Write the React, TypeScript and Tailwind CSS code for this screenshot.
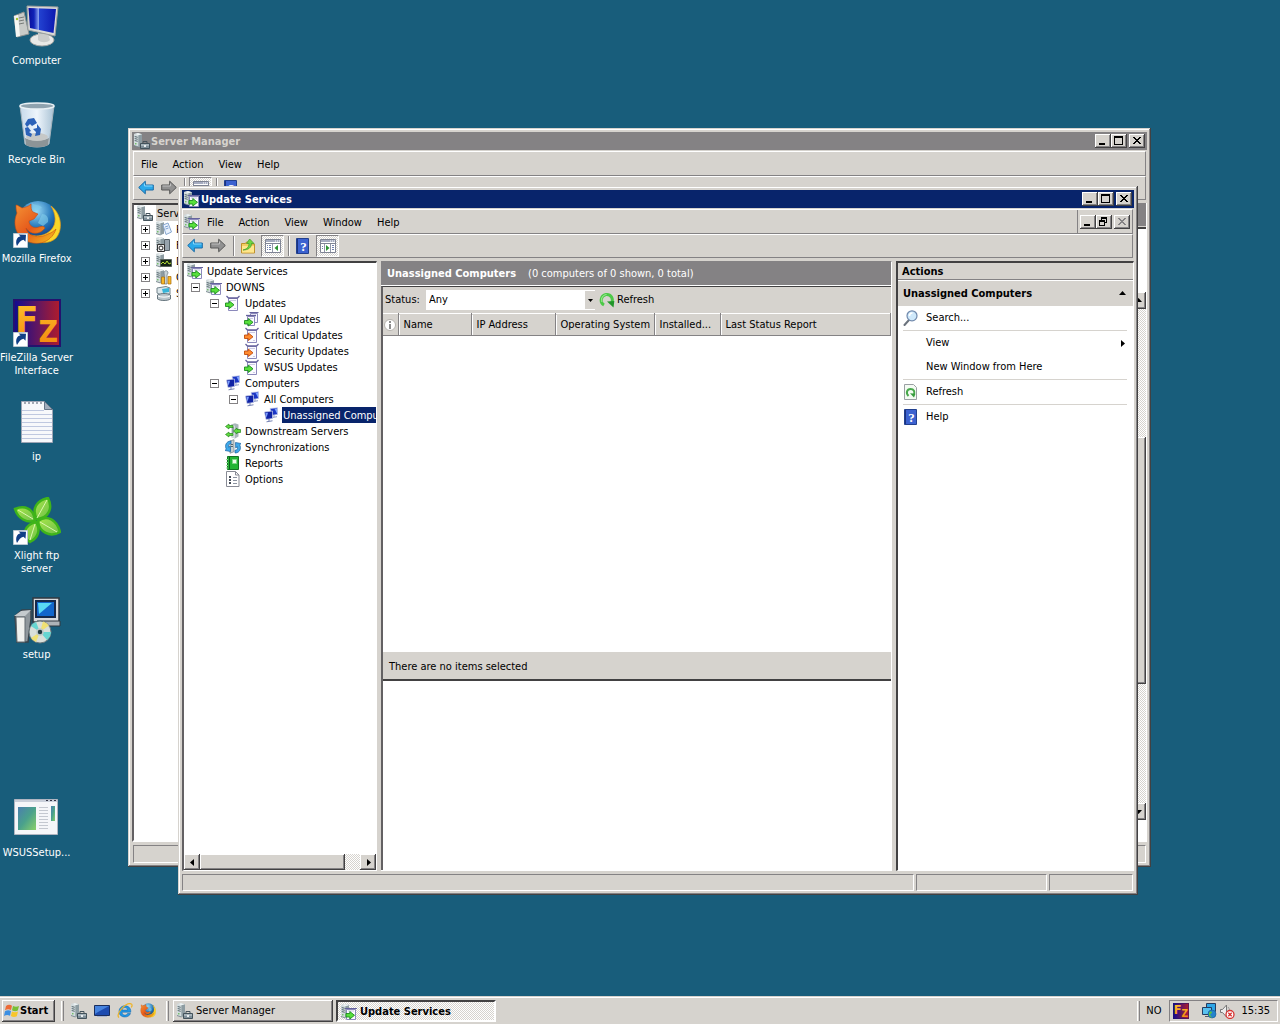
import React from "react";
import type { ReactNode } from "react";

const RAISED =
  "bg-[#d6d3ce] shadow-[inset_-1px_-1px_0_#424142,inset_1px_1px_0_#ffffff,inset_-2px_-2px_0_#848284]";
const CHECKER = "bg-[repeating-conic-gradient(#ffffff_0_25%,#d6d3ce_0_50%)] bg-[length:2px_2px]";
const BAND = "border border-t-white border-l-white border-r-[#848284] border-b-[#848284]";
const SUNKEN = "border border-t-[#848284] border-l-[#848284] border-r-white border-b-white";
const FRAME =
  "flex flex-col bg-[#d6d3ce] p-1 shadow-[inset_-1px_-1px_0_#424142,inset_1px_1px_0_#d6d3ce,inset_-2px_-2px_0_#848284,inset_2px_2px_0_#ffffff]";

/* ---------- small icons (16 x 16) ---------- */

function Svg16({ children }: { children: ReactNode }) {
  return (
    <svg viewBox="0 0 16 16" className="h-4 w-4 shrink-0" aria-hidden="true">
      {children}
    </svg>
  );
}

function Tower() {
  return (
    <>
      <path d="M0 1 4 0 8 1.300V12.500L4.500 14 0 12.500z" fill="#a3b1b5" />
      <path d="M0 1 4.500 2.300V14L0 12.500z" fill="#d3dcde" />
      <path d="M4.500 2.300 8 1.300V12.500L4.500 14z" fill="#8d9ca2" />
      <path d="M0 1 4 0l4 1.300-3.500 1z" fill="#eef3f4" />
      <path d="m.7 3.500 3 .8M.7 5.500l3 .8M.7 7.500l3 .8" stroke="#56676e" />
      <path d="M1 10.800h1.500" stroke="#4fb63a" />
      <path d="M0 12.500 4.500 14" stroke="#6f7f85" strokeWidth=".8" />
    </>
  );
}

function GreenArrow({ x = 0, y = 0, color = "#58e03c", edge = "#1c8c1e" }: { x?: number; y?: number; color?: string; edge?: string }) {
  return (
    <path
      transform={`translate(${x} ${y})`}
      d="M.5 2.500h3.800V.5L9 4.300 4.300 8V6H.5z"
      fill={color}
      stroke={edge}
      strokeWidth=".9"
    />
  );
}

function ServerUpdateIcon() {
  return (
    <Svg16>
      <Tower />
      <path d="M5.500 5.500h9v10h-9z" fill="#fbfbff" stroke="#8b89bb" />
      <path d="M4 4.500h12" stroke="#65629d" />
      <path d="M7 7h6" stroke="#c9c7e2" />
      <GreenArrow x={4.500} y={7} />
    </Svg16>
  );
}

function ServerToolsIcon() {
  return (
    <Svg16>
      <Tower />
      <path d="M6.500 10.500h9v5h-9z" fill="#7f8f99" stroke="#43525b" />
      <path d="M9 10V8.500h4V10" fill="none" stroke="#43525b" />
      <path d="M7 12h8" stroke="#ccd6da" />
      <path d="M10 12h2v2h-2z" fill="#e8edef" />
    </Svg16>
  );
}

function ServerBadgeIcon({ kind }: { kind: "roles" | "features" | "diag" | "config" }) {
  return (
    <Svg16>
      <Tower />
      {kind === "roles" && (
        <>
          <path d="m7 4 5-2 3.500 9-5.500 2.500z" fill="#e9f2fd" stroke="#86a6cf" />
          <path d="m9 6 3-1M9.500 8l3-1" stroke="#7da2d4" />
        </>
      )}
      {kind === "features" && (
        <>
          <path d="M8.500 2.500h5v11h-5z" fill="#98a4ad" stroke="#59656d" />
          <path d="M1.500 7.500h7v7h-7z" fill="#e7e7e7" stroke="#333" />
          <circle cx="5" cy="11" r="2" fill="#fff" stroke="#222" />
        </>
      )}
      {kind === "diag" && (
        <>
          <path d="M4.500 6.500h11v7h-11z" fill="#142314" stroke="#58625c" />
          <path d="m5 11 2-2 2 2 2-3 2 3 2-1" fill="none" stroke="#b3dd35" />
        </>
      )}
      {kind === "config" && (
        <>
          <path d="M8 4c0-3 4-3 4 0l-1 2v9H8.500V6z" fill="#c9d3d8" stroke="#6c7a82" strokeWidth=".7" />
          <path d="M5.500 8h3v7h-3zM12 7.500h3V15h-3z" fill="#f7b928" stroke="#a66c0b" strokeWidth=".7" />
        </>
      )}
    </Svg16>
  );
}

function StorageIcon() {
  return (
    <Svg16>
      <path d="M1 3 10 1.500l4 1.500v6L5 10 1 8z" fill="#dce7eb" stroke="#72838b" />
      <path d="m6 4 7-1v4L7 8z" fill="#36b4d8" />
      <path d="M1.500 10c3-2 10-2 13 0v4c-3 2-10 2-13 0z" fill="#bac5cb" stroke="#68777f" />
      <path d="M2 11c3 1.500 9 1.500 12 0" fill="none" stroke="#fff" />
    </Svg16>
  );
}

function UpdatesIcon({ color, edge, stacked = false }: { color?: string; edge?: string; stacked?: boolean }) {
  return (
    <Svg16>
      {stacked && (
        <>
          <path d="M6.500 2.500h7v9h-7z" fill="#f8f8ff" stroke="#8b89bb" />
          <path d="M5.500 1.500h9" stroke="#65629d" />
        </>
      )}
      <path d={stacked ? "M3.500 5.500h7v9h-7z" : "M3.500 3.500h9v12h-9z"} fill="#fbfbff" stroke="#8b89bb" />
      <path d={stacked ? "M2 4.500h10" : "M1.500 1 3.500 3h9l2-2"} fill="none" stroke="#65629d" strokeWidth="1.300" />
      <path d={stacked ? "M5 7.500h4" : "M5 5.500h6M9 13.500h2"} stroke="#cccae4" />
      <GreenArrow x={0} y={stacked ? 7 : 5.500} color={color} edge={edge} />
    </Svg16>
  );
}

function ComputersIcon() {
  return (
    <Svg16>
      <path d="M7 1.500 14.500.8v6.700L9 8.300z" fill="#1c36c4" stroke="#c5cde8" strokeWidth=".7" />
      <path d="m11.500 1.800 2.500-.3v5z" fill="#7fa3ff" />
      <path d="M11 8.200v1.800M9.500 10.500l4.500-.8" stroke="#8e9cc5" />
      <path d="M1.500 5 9.500 4v7.500L3 12.500z" fill="#1023a4" stroke="#c5cde8" strokeWidth=".7" />
      <path d="m2.500 6 2.500-.3-1.500 5z" fill="#7d9fff" />
      <path d="M6 12v2M3.500 14.800l6-1" stroke="#7482b3" />
    </Svg16>
  );
}

function DownstreamIcon() {
  return (
    <Svg16>
      <path d="M6 1.500 10 .3l3.500 1.200v12l-3.500 2-4-1.500z" fill="#a9b6ba" />
      <path d="M6 1.500 10 2.700v12.800L6 14z" fill="#d3dcde" />
      <path d="M7 5h2M7 7h2M7 9h2" stroke="#4c5d64" />
      <path d="M8 4.500H4V6L.5 3.500 4 1v1.500h4zM8 12.500H4V14L.5 11.500 4 9v1.500h4zM15.500 9.500H12V11L8.500 8 12 5v1.500h3.500z" fill="#5fdb3f" stroke="#25871d" strokeWidth=".7" />
    </Svg16>
  );
}

function SyncIcon() {
  return (
    <Svg16>
      <path d="M5 2 9 .7v12l-4 1.500z" fill="#c4ced1" stroke="#6f7f85" strokeWidth=".7" />
      <path d="M6 5.500h2M6 7.500h2" stroke="#56666d" />
      <path d="M6 2C1 2-.5 7 1.300 10L0 11.500l5.500 1L5.300 7 3.700 8.300C3 6 4 4.800 6 4.800z" fill="#3fa9ea" stroke="#17609f" strokeWidth=".7" />
      <path d="M10 14c5 0 6.500-5 4.700-8L16 4.500 10.500 3.500l.2 5.500 1.600-1.300c.7 2.300-.3 3.500-2.300 3.500z" fill="#3fa9ea" stroke="#17609f" strokeWidth=".7" />
    </Svg16>
  );
}

function ReportsIcon() {
  return (
    <Svg16>
      <path d="M2.500 1.500h11v13h-11z" fill="#22b534" stroke="#127322" />
      <path d="M4.500 2v12" stroke="#0c5c18" />
      <path d="M7.500 4.500h4v4h-4z" fill="#eafbe9" stroke="#7fd987" />
      <path d="M1 4.500h2M1 7.500h2M1 10.500h2M1 13h2" stroke="#8ddf92" />
    </Svg16>
  );
}

function OptionsIcon() {
  return (
    <Svg16>
      <path d="M1.500.5h9l3.500 3.500v11.500H1.500z" fill="#fff" stroke="#888b95" />
      <path d="M10.500.5V4H14" fill="none" stroke="#888b95" />
      <path d="M4 5h2v2H4zM4 8h2v2H4zM4 11h2v2H4z" fill="#464d58" />
      <path d="M8 6.500h4M8 9.500h4M8 12.500h4" stroke="#8b93a0" />
    </Svg16>
  );
}

function NavArrow({ forward = false }: { forward?: boolean }) {
  return forward ? (
    <Svg16>
      <path d="M.7 5h8V1.200L15.300 7.500l-6.600 6.300V10h-8z" fill="#919191" stroke="#565656" />
      <path d="M1.500 6h8V3.500" fill="none" stroke="#c0c0c0" />
    </Svg16>
  ) : (
    <Svg16>
      <path d="M15.300 5h-8V1.200L.7 7.500l6.600 6.300V10h8z" fill="#2ba9ea" stroke="#1a6ba7" />
      <path d="M14.500 6h-8V3.500" fill="none" stroke="#8ad8fb" />
    </Svg16>
  );
}

function FolderUpIcon() {
  return (
    <Svg16>
      <path d="M1.500 5.500h4l1-1.500h5v2h3v9h-13z" fill="#f3cf61" stroke="#c0912c" />
      <path d="M2 8h12v6.500H2z" fill="#ffe68c" />
      <path d="M3 12c4-1 6-3 6-6.500H6.500L9.700 1 14 5.500h-2.500c0 4-3 6.500-8.500 6.500z" fill="#6ed742" stroke="#3f9a26" strokeWidth=".7" />
    </Svg16>
  );
}

function PaneIcon({ right = false }: { right?: boolean }) {
  return (
    <Svg16>
      <path d="M.5 1.500h15v13H.5z" fill="#fff" stroke="#7f8494" />
      <path d="M1 2h14v2H1z" fill="#a6acc0" />
      <path d="M10 3h1M12 3h1M14 3h1" stroke="#fff" />
      <path d="M1 5.500h14" stroke="#7f8494" />
      {right ? (
        <>
          <path d="M10.500 6v8M4.500 6v8" stroke="#9298a9" />
          <path d="m6 7 3.500 3L6 13z" fill="#2d9434" />
          <path d="M12 7.500h2M12 9.500h2M12 11.500h2M2 8.500h1M2 10.500h1" stroke="#7180ae" />
        </>
      ) : (
        <>
          <path d="M7.500 6v8" stroke="#9298a9" />
          <path d="m13 7-3.500 3 3.500 3z" fill="#2d9434" />
          <path d="M2 7.500h1M4 7.500h2M2 9.500h1M4 9.500h2M2 11.500h1M4 11.500h2" stroke="#7180ae" />
        </>
      )}
    </Svg16>
  );
}

function HelpIcon() {
  return (
    <Svg16>
      <path d="M1.500.5h12v15h-12z" fill="#3c62d0" stroke="#22408f" />
      <path d="M2.500 1v14" stroke="#1b337f" />
      <text x="8.500" y="12.500" fontSize="13" fontWeight="700" fill="#fff" textAnchor="middle" fontFamily="Liberation Serif, serif">
        ?
      </text>
    </Svg16>
  );
}

function SearchIcon() {
  return (
    <Svg16>
      <path d="M6 10 1.500 15" stroke="#6b737d" strokeWidth="2" strokeLinecap="round" />
      <circle cx="9" cy="5.800" r="5" fill="#cfe9fb" stroke="#7089ac" strokeWidth="1.200" />
      <path d="M6.500 6c0-2 1.500-3 3-3" fill="none" stroke="#fff" strokeWidth="1.500" />
    </Svg16>
  );
}

function RefreshPageIcon() {
  return (
    <Svg16>
      <path d="M1.500.5h9L13.500 3.500v12h-12z" fill="#f4fbf3" stroke="#9a9fa3" />
      <path d="M5.500 12C2.500 9 4 5 7.500 5c3.500 0 4.500 3 3.500 5.500" fill="none" stroke="#48a84c" strokeWidth="2" />
      <path d="m7 9.300 5.500.4-1.500 3.800z" fill="#369c3d" />
    </Svg16>
  );
}

function RefreshIcon() {
  return (
    <Svg16>
      <path d="M5 13C.5 10.500 1.500 3.500 7 2.500c5-.6 7.500 4 5.800 8.500" fill="none" stroke="#4cc947" strokeWidth="3" />
      <path d="M3 10C1.500 6 4 3 7.500 2.500" fill="none" stroke="#a6ef9d" />
      <path d="m8 9.500 7.300-.5-.8 6.500z" fill="#21952a" />
    </Svg16>
  );
}

function DesktopIcon() {
  return (
    <Svg16>
      <path d="M.5 2.500h15v10H.5z" fill="#1d4bb0" stroke="#1b2e5d" />
      <path d="M1 3h14L4 9 1 11z" fill="#4683de" />
      <path d="M3 13.500h10" stroke="#a9b6d4" />
    </Svg16>
  );
}

function ExplorerIcon() {
  return (
    <Svg16>
      <path d="M13.800 9.200H5c0 3.200 4.500 3.800 5.500 1.300h3C12 15.500 2 15.500 2 8.500 2 1 14.500.5 13.800 9.200zM5 7h5.600C10 3.800 5.700 3.800 5 7z" fill="#2396e3" stroke="#0f62a9" strokeWidth=".5" />
      <path d="M2 14.500C-2 12 8-.5 14 .8c1.500.5 1.300 2 .3 3.700" fill="none" stroke="#f0b323" strokeWidth="1.200" />
    </Svg16>
  );
}

function FirefoxArt() {
  return (
    <>
      <defs>
        <radialGradient id="ffGlobe" cx=".45" cy=".25" r=".8">
          <stop offset="0" stopColor="#9bdcf6" />
          <stop offset=".5" stopColor="#2678bb" />
          <stop offset="1" stopColor="#0b2560" />
        </radialGradient>
        <linearGradient id="ffFur" x1="0" y1="0" x2="1" y2="1">
          <stop offset="0" stopColor="#f49335" />
          <stop offset=".5" stopColor="#e5581a" />
          <stop offset="1" stopColor="#f4c51d" />
        </linearGradient>
      </defs>
      <circle cx="25" cy="21" r="20" fill="url(#ffGlobe)" />
      <path d="M19 3c3 3 8 1 10 5-4 1-5 4-9 3zM29 14c4 0 7 3 6 8l-5 4-5-3z" fill="#7fcbea" opacity=".65" />
      <path d="M38 6c5 8 6 18 0 24-6 6-14 7-20 5 3 9 18 10 25 3 7-8 6-24-5-32z" fill="#f9d629" stroke="#e79a17" strokeWidth=".7" />
      <path d="M3 5c2 0 4 2 6 3 3-1 6-1 9-4 0 4 0 6 2 8l5 2-4 5-5 2c0 5 5 8 10 6 3-1 5-1 6 1-5 7-15 7-19 0 2 9 13 11 22 6 3-1 6-3 8-5-4 12-16 17-27 13C3 38-1 24 4 13c-1-3-1-5-1-8z" fill="url(#ffFur)" stroke="#c9480f" strokeWidth=".6" />
    </>
  );
}

function FileZillaArt() {
  return (
    <>
      <defs>
        <linearGradient id="fzBack">
          <stop offset="0" stopColor="#0d0a92" />
          <stop offset=".55" stopColor="#68175c" />
          <stop offset="1" stopColor="#b51c29" />
        </linearGradient>
        <linearGradient id="fzGold" x1="0" y1="0" x2="0" y2="1">
          <stop offset="0" stopColor="#ffc42c" />
          <stop offset="1" stopColor="#f3850c" />
        </linearGradient>
      </defs>
      <path d="M0 0h48v48H0z" fill="url(#fzBack)" />
      <path d="M1 1h46v46H1z" fill="none" stroke="#24126e" strokeWidth="2" />
      <text x="2" y="34" fill="url(#fzGold)" fontFamily="DejaVu Sans Condensed, DejaVu Sans, sans-serif" fontWeight="700">
        <tspan fontSize="38">F</tspan>
        <tspan fontSize="30" dy="9">Z</tspan>
      </text>
    </>
  );
}

/* ---------- desktop icons (48 x 48) ---------- */

function Svg48({ children, shortcut = false }: { children: ReactNode; shortcut?: boolean }) {
  return (
    <svg viewBox="0 0 48 48" className="h-12 w-12 shrink-0" aria-hidden="true">
      {children}
      {shortcut && (
        <g>
          <path d="M.5 33.500h14v14H.5z" fill="#fff" stroke="#b9c7d1" />
          <path d="M4 46c-2-5 0-9 3.500-9.700L5.500 34.500l7.500.2-.5 7-2-2c-3 .5-4.500 3-6.500 6.300z" fill="#113f86" />
        </g>
      )}
    </svg>
  );
}

function ComputerArt() {
  return (
    <Svg48>
      <defs>
        <linearGradient id="screenBlue">
          <stop offset="0" stopColor="#0a0f9a" />
          <stop offset=".2" stopColor="#1023b8" />
          <stop offset=".38" stopColor="#8fa9f5" />
          <stop offset=".4" stopColor="#2241d0" />
          <stop offset="1" stopColor="#0c18b0" />
        </linearGradient>
      </defs>
      <path d="M1 14 11 10l5 22-12 3z" fill="#c9cbc8" stroke="#8d9190" />
      <path d="m1 14 4-1 2 21-4 1z" fill="#f6f6f3" />
      <path d="m6 16 5-1M6 19l5-1M6 22l5-1" stroke="#777b78" />
      <circle cx="4" cy="17" r="1.200" fill="#a8c52f" />
      <ellipse cx="29" cy="38" rx="12" ry="6" fill="#e8e8e6" stroke="#a2a4a2" />
      <path d="m25 31 10 1 2 6c-3 3-9 3-12 0z" fill="#cacccb" />
      <path d="m14 4 31 1-3 29-27-6z" fill="#d9dad8" stroke="#9d9f9e" />
      <path d="M15.500 6 43 7 40.500 31 17 26z" fill="url(#screenBlue)" />
    </Svg48>
  );
}

function BinArt() {
  return (
    <Svg48>
      <defs>
        <linearGradient id="binGlass">
          <stop offset="0" stopColor="#c6d9ea" />
          <stop offset=".5" stopColor="#eef5fc" />
          <stop offset="1" stopColor="#a9c2d4" />
        </linearGradient>
      </defs>
      <path d="m7 5 5 38c5 4 19 4 24 0l5-38z" fill="url(#binGlass)" stroke="#a6b4bd" />
      <path d="M12 37c5 3 19 3 24 0l-1 7c-5 3-17 3-22 0z" fill="#8d9497" />
      <ellipse cx="24" cy="36" rx="11" ry="4" fill="#c6c8c7" />
      <ellipse cx="24" cy="5" rx="17" ry="3" fill="#8fa3af" stroke="#e9f1f5" strokeWidth="1.500" />
      <path d="m12 23 3-5 6-1 3 5-5 3-2-2-3 3zM24 23l4 5-1 6-5 1 1-4-3-3 4-1zM12 27l3-1 3 4-2 1 3 2-1 3-5-2z" fill="#2c62b8" />
    </Svg48>
  );
}

function NotesArt() {
  return (
    <Svg48>
      <path d="M8.500 3.500h23l8 8v33h-31z" fill="#f7f8fb" stroke="#9ea5b5" />
      <path d="M31.500 3.500v8h8z" fill="#a2aebd" stroke="#667588" />
      <path d="M9 12.500h22M9 16.500h30M9 20.500h30M9 24.500h30M9 28.500h30M9 32.500h30M9 36.500h30M9 40.500h30" stroke="#bfc8e0" />
      <path d="M11 5h2M15 5h2M19 5h2M23 5h2M27 5h2" stroke="#a2a8b3" strokeWidth="2" />
    </Svg48>
  );
}

function LeafArt() {
  return (
    <Svg48 shortcut>
      <defs>
        <linearGradient id="leafGreen" x1="0" y1="0" x2="1" y2="1">
          <stop offset="0" stopColor="#a9e64a" />
          <stop offset="1" stopColor="#6cbf4a" />
        </linearGradient>
      </defs>
      <g fill="url(#leafGreen)" stroke="#3fb41a" strokeWidth="2.500">
        <path d="M24 22C18 12 24 3 35 1c5 10 1 20-11 21z" />
        <path d="M22 24C14 26 5 22 2 12c9-4 19-1 20 12z" />
        <path d="M25 24c9-7 19-1 22 11-10 6-21 0-22-11z" />
        <path d="M23 25c5 8 2 16-6 20-9-6-6-17 6-20z" />
      </g>
      <path d="M24 21 34 3M20 22 5 13M27 25l17 10M22 27l-5 16" stroke="#dcf7b0" strokeWidth="1" />
    </Svg48>
  );
}

function SetupArt() {
  return (
    <Svg48>
      <path d="M20 2h26v24H20z" fill="#d8dadd" stroke="#303940" strokeWidth="1.500" />
      <path d="M23 5h19v16H23z" fill="#1266cb" stroke="#16294a" strokeWidth="2" />
      <path d="M25 7h14L26 18z" fill="#58d8f4" />
      <path d="M24 25h23v5H24z" fill="#aeb3b8" stroke="#303940" />
      <path d="m2 20 7-6h9v9l-3 23H4z" fill="#8f979c" stroke="#38434b" strokeWidth="1.500" />
      <path d="M3 21h9v25H4z" fill="#f0f1ee" stroke="#636b70" />
      <path d="m1 20 7-5 10-1-6 6z" fill="#c5cbce" />
      <circle cx="27" cy="36" r="11" fill="#d9dfda" stroke="#69777a" />
      <path d="M27 36 18 30a11 11 0 0 1 5-4zM27 36l11 0a11 11 0 0 1-4 8z" fill="#67d6d2" />
      <path d="m27 36 3-10.500a11 11 0 0 1 6 4zM27 36l-4 10a11 11 0 0 1-5-4z" fill="#f0e174" />
      <circle cx="27" cy="36" r="3" fill="#21383f" stroke="#bfc9c9" strokeWidth="1.500" />
    </Svg48>
  );
}

function AppWindowArt() {
  return (
    <Svg48>
      <defs>
        <linearGradient id="appPicture" x1="0" y1="0" x2="1" y2="1">
          <stop offset="0" stopColor="#4b7fae" />
          <stop offset=".5" stopColor="#4aa18c" />
          <stop offset="1" stopColor="#8ad06a" />
        </linearGradient>
      </defs>
      <path d="M1.500 5.500h43v35h-43z" fill="#f5f6f9" stroke="#b0b5c1" />
      <path d="M2 6h42v2H2z" fill="#c9cfda" />
      <path d="M33 6.500h2M37 6.500h2M41 6.500h2" stroke="#334" />
      <path d="M5 13h18v23H5z" fill="url(#appPicture)" />
      <path d="M26 13.500h9M26 16.500h9M26 19.500h9M26 22.500h9M26 25.500h9M26 28.500h9M26 31.500h9M26 34.500h9" stroke="#c4c8d0" />
      <path d="M38 12h4v15h-4z" fill="url(#appPicture)" />
    </Svg48>
  );
}

function DesktopItem({ label, children, className = "" }: { label: string; children: ReactNode; className?: string }) {
  return (
    <button type="button" className={`flex flex-col items-center gap-1 pt-0.5 text-center leading-[13px] text-white ${className}`}>
      {children}
      <span className="whitespace-pre">{label}</span>
    </button>
  );
}

/* ---------- window pieces ---------- */

function CaptionButton({ kind, disabled = false }: { kind: "min" | "max" | "close" | "restore"; disabled?: boolean }) {
  const names = { min: "Minimize", max: "Maximize", close: "Close", restore: "Restore" };
  return (
    <button type="button" aria-label={names[kind]} disabled={disabled} className={`flex h-3.5 w-4 items-center justify-center ${RAISED}`}>
      <svg viewBox="0 0 16 14" className="h-3.5 w-4" fill="none" stroke={disabled ? "#848284" : "#000"} shapeRendering="crispEdges" aria-hidden="true">
        {kind === "min" && <path d="M4 10h6" strokeWidth="2" />}
        {kind === "max" && <path d="M3.500 2.500h8v8h-8zM3 3.500h9" />}
        {kind === "restore" && <path d="M5.500 5V2.500h5v5H9M5 3.500h6M3.500 5.500h5v5h-5zM3 6.500h6" />}
        {kind === "close" && <path d="m4 3 7 7M5 3l7 7M11 3l-7 7M12 3l-7 7" />}
      </svg>
    </button>
  );
}

function TitleBar({ title, icon, active = false }: { title: string; icon: ReactNode; active?: boolean }) {
  return (
    <header className={`flex h-[18px] shrink-0 items-center px-0.5 font-bold ${active ? "bg-[#08246b] text-white" : "bg-[#848284] text-[#d6d3ce]"}`}>
      {icon}
      <h2 className="flex-1 pt-px pl-px">{title}</h2>
      <CaptionButton kind="min" />
      <CaptionButton kind="max" />
      <span className="w-0.5" />
      <CaptionButton kind="close" />
    </header>
  );
}

function MenuItems({ items }: { items: string[] }) {
  return (
    <nav className="flex items-center gap-px">
      {items.map((item) => (
        <button type="button" key={item} className="px-[7px] pt-0.5">
          {item}
        </button>
      ))}
    </nav>
  );
}

function ToolButton({ label, children, pressed = false }: { label: string; children: ReactNode; pressed?: boolean }) {
  return (
    <button type="button" aria-label={label} className={`flex h-[22px] w-[23px] items-center justify-center ${pressed ? `ml-0.5 ${SUNKEN} ${CHECKER}` : ""}`}>
      {children}
    </button>
  );
}

function ToolDivider() {
  return <span className="mr-px ml-1 h-5 w-0.5 border-l border-[#848284] bg-white" />;
}

function TreeRow({
  label,
  icon,
  indent,
  open,
  labelClass = "",
}: {
  label: string;
  icon: ReactNode;
  indent: string;
  open?: boolean;
  labelClass?: string;
}) {
  return (
    <li className={`flex h-4 items-center whitespace-nowrap ${indent}`}>
      {open !== undefined && (
        <button type="button" aria-label={`${open ? "Collapse" : "Expand"} ${label}`} className="mr-1.5 h-[9px] w-[9px] shrink-0">
          <svg viewBox="0 0 9 9" className="h-[9px] w-[9px]" fill="none" shapeRendering="crispEdges" aria-hidden="true">
            <path d="M.5.5h8v8h-8z" stroke="#848284" fill="#fff" />
            <path d={open ? "M2 4.500h5" : "M2 4.500h5M4.500 2v5"} stroke="#000" />
          </svg>
        </button>
      )}
      {icon}
      <span className={`ml-[3px] h-4 px-px leading-[18px] ${labelClass}`}>{label}</span>
    </li>
  );
}

function Triangle({ dir, className = "" }: { dir: "left" | "right" | "up" | "down"; className?: string }) {
  const shapes = {
    left: "M6 1v7L2 4.500z",
    right: "M3 1v7l4-3.500z",
    up: "M1 6h7L4.500 2z",
    down: "M1 3h7L4.500 7z",
  };
  return (
    <svg viewBox="0 0 9 9" className={`h-[9px] w-[9px] ${className}`} aria-hidden="true">
      <path d={shapes[dir]} fill="#000" />
    </svg>
  );
}

function ServerManager() {
  return (
    <section aria-label="Server Manager" className={`absolute top-32 right-[129px] bottom-[129px] left-32 ${FRAME}`}>
      <TitleBar title="Server Manager" icon={<ServerToolsIcon />} />
      <div className={`mx-px mt-px flex h-[25px] shrink-0 items-center ${BAND}`}>
        <MenuItems items={["File", "Action", "View", "Help"]} />
      </div>
      <div className={`mx-px flex h-6 shrink-0 items-center ${BAND}`}>
        <ToolButton label="Back"><NavArrow /></ToolButton>
        <ToolButton label="Forward"><NavArrow forward /></ToolButton>
        <ToolDivider />
        <ToolButton label="Show console tree" pressed><PaneIcon /></ToolButton>
        <ToolDivider />
        <ToolButton label="Help"><HelpIcon /></ToolButton>
      </div>
      <div className="mt-[3px] flex min-h-0 flex-1">
        <ul className="w-[243px] shrink-0 overflow-hidden border-2 border-t-[#424142] border-r-white border-b-white border-l-[#636163] bg-white">
          <TreeRow label="Server Manager (DOWNS)" icon={<ServerToolsIcon />} indent="pl-[3px]" labelClass="bg-[#d6d3ce]" />
          <TreeRow label="Roles" icon={<ServerBadgeIcon kind="roles" />} indent="pl-[7px]" open={false} />
          <TreeRow label="Features" icon={<ServerBadgeIcon kind="features" />} indent="pl-[7px]" open={false} />
          <TreeRow label="Diagnostics" icon={<ServerBadgeIcon kind="diag" />} indent="pl-[7px]" open={false} />
          <TreeRow label="Configuration" icon={<ServerBadgeIcon kind="config" />} indent="pl-[7px]" open={false} />
          <TreeRow label="Storage" icon={<StorageIcon />} indent="pl-[7px]" open={false} />
        </ul>
        <div className="ml-1 flex flex-1 flex-col border-r border-b border-white">
          <div className="h-[23px] shrink-0 bg-[#848284]" />
          <div className="mt-px h-0.5 shrink-0 bg-[#424142]" />
          <div className="h-[63px] shrink-0 bg-white" />
          <div className={`flex min-h-0 w-4 flex-1 flex-col self-end ${CHECKER}`}>
            <button type="button" aria-label="Scroll up" className={`flex h-[17px] items-center justify-center ${RAISED}`}><Triangle dir="up" /></button>
            <div className="grow-[13]" />
            <div className={`grow-[25] ${RAISED}`} />
            <div className="grow-[12]" />
            <button type="button" aria-label="Scroll down" className={`flex h-[17px] items-center justify-center ${RAISED}`}><Triangle dir="down" /></button>
          </div>
          <div className="h-[21px] shrink-0 bg-white" />
        </div>
      </div>
      <div className="mt-[3px] flex h-[18px] shrink-0 px-px">
        <div className={`flex-1 ${SUNKEN}`} />
      </div>
    </section>
  );
}

function ActionRow({ label, icon, children }: { label: string; icon?: ReactNode; children?: ReactNode }) {
  return (
    <button type="button" className="flex h-6 w-full items-center gap-[7px] text-left">
      <span className="w-4 shrink-0">{icon}</span>
      <span className="flex-1">{label}</span>
      {children}
    </button>
  );
}

const SERVER_TREE = [
  { label: "Update Services", icon: <ServerUpdateIcon />, indent: "pl-[3px]" },
  { label: "DOWNS", icon: <ServerUpdateIcon />, indent: "pl-[7px]", open: true },
  { label: "Updates", icon: <UpdatesIcon />, indent: "pl-[26px]", open: true },
  { label: "All Updates", icon: <UpdatesIcon stacked />, indent: "pl-[60px]" },
  { label: "Critical Updates", icon: <UpdatesIcon color="#ff8b30" edge="#c24c0b" />, indent: "pl-[60px]" },
  { label: "Security Updates", icon: <UpdatesIcon color="#ff8b30" edge="#c24c0b" />, indent: "pl-[60px]" },
  { label: "WSUS Updates", icon: <UpdatesIcon />, indent: "pl-[60px]" },
  { label: "Computers", icon: <ComputersIcon />, indent: "pl-[26px]", open: true },
  { label: "All Computers", icon: <ComputersIcon />, indent: "pl-[45px]", open: true },
  { label: "Unassigned Computers", icon: <ComputersIcon />, indent: "pl-[79px]", labelClass: "bg-[#08246b] text-white" },
  { label: "Downstream Servers", icon: <DownstreamIcon />, indent: "pl-[41px]" },
  { label: "Synchronizations", icon: <SyncIcon />, indent: "pl-[41px]" },
  { label: "Reports", icon: <ReportsIcon />, indent: "pl-[41px]" },
  { label: "Options", icon: <OptionsIcon />, indent: "pl-[41px]" },
];

const COLUMNS = [
  { label: "Name", width: "w-[73px]" },
  { label: "IP Address", width: "w-[84px]" },
  { label: "Operating System", width: "w-[99px]" },
  { label: "Installed...", width: "w-[66px]" },
  { label: "Last Status Report", width: "" },
];

function UpdateServices() {
  return (
    <section aria-label="Update Services" className={`absolute top-[186px] right-[142px] bottom-[101px] left-[178px] ${FRAME}`}>
      <TitleBar title="Update Services" icon={<ServerUpdateIcon />} active />
      <div className={`mt-px mr-px flex h-[25px] shrink-0 items-center pl-px ${BAND}`}>
        <ServerUpdateIcon />
        <MenuItems items={["File", "Action", "View", "Window", "Help"]} />
        <div className="flex-1" />
        <div className="flex h-full items-center border-l border-[#848284] pr-0.5 pl-0.5">
          <CaptionButton kind="min" />
          <CaptionButton kind="restore" />
          <span className="w-0.5" />
          <CaptionButton kind="close" disabled />
        </div>
      </div>
      <div className={`mr-px flex h-6 shrink-0 items-center ${BAND}`}>
        <ToolButton label="Back"><NavArrow /></ToolButton>
        <ToolButton label="Forward"><NavArrow forward /></ToolButton>
        <ToolDivider />
        <ToolButton label="Up one level"><FolderUpIcon /></ToolButton>
        <ToolButton label="Show console tree" pressed><PaneIcon /></ToolButton>
        <ToolDivider />
        <ToolButton label="Help"><HelpIcon /></ToolButton>
        <ToolButton label="Show action pane" pressed><PaneIcon right /></ToolButton>
      </div>

      <div className="mt-[3px] flex min-h-0 flex-1">
        <div className="flex w-[195px] shrink-0 flex-col border-t-2 border-r border-b border-l-2 border-t-[#424142] border-r-white border-b-white border-l-[#636163] bg-white">
          <ul className="min-h-0 flex-1 overflow-hidden">
            {SERVER_TREE.map((row) => (
              <TreeRow key={row.label} {...row} />
            ))}
          </ul>
          <div className={`flex h-4 shrink-0 ${CHECKER}`}>
            <button type="button" aria-label="Scroll left" className={`flex w-4 items-center justify-center ${RAISED}`}><Triangle dir="left" /></button>
            <div className={`w-[145px] ${RAISED}`} />
            <div className="flex-1" />
            <button type="button" aria-label="Scroll right" className={`flex w-4 items-center justify-center ${RAISED}`}><Triangle dir="right" /></button>
          </div>
        </div>

        <main className="ml-1 flex min-w-0 flex-1 flex-col border-t border-r border-b border-t-[#848284] border-r-white border-b-white">
          <div className="flex h-[23px] shrink-0 items-center gap-3 bg-[#848284] px-1.5 text-white">
            <h1 className="font-bold">Unassigned Computers</h1>
            <span>(0 computers of 0 shown, 0 total)</span>
          </div>
          <div className="flex min-h-0 flex-1 flex-col border-t border-t-white">
            <div className="flex min-h-0 flex-1 flex-col border-t border-l-2 border-t-[#424142] border-l-[#636163]">
              <div className="flex h-[26px] shrink-0 items-center pl-0.5">
                <label htmlFor="status" className="w-[41px]">Status:</label>
                <div className="relative flex h-5 w-[169px]">
                  <select id="status" className="h-5 w-full appearance-none bg-white pl-[3px] outline-none">
                    <option>Any</option>
                  </select>
                  <span className="pointer-events-none absolute top-px right-0 bottom-px flex w-2.5 items-center justify-center bg-[#d6d3ce]">
                    <svg viewBox="0 0 5 3" className="h-[3px] w-[5px]" aria-hidden="true"><path d="M0 0h5L2.500 3z" /></svg>
                  </span>
                </div>
                <button type="button" className="flex items-center gap-0.5 pl-1">
                  <RefreshIcon />
                  Refresh
                </button>
              </div>
              <div className="flex-1 bg-white">
                <table className="w-full table-fixed border-collapse bg-[#d6d3ce] text-left">
                  <thead>
                    <tr className="h-[22px] border-y border-t-white border-b-[#848284]">
                      <th className="w-[15px] border-r border-[#848284] p-0" aria-label="Information">
                        <svg viewBox="0 0 14 14" className="h-3.5 w-3.5" aria-hidden="true">
                          <circle cx="7" cy="7" r="5.500" fill="#fff" stroke="#b5b2ad" />
                          <path d="M7 3v2M7 6v5" stroke="#424142" strokeWidth="1.200" />
                        </svg>
                      </th>
                      {COLUMNS.map((c) => (
                        <th key={c.label} scope="col" className={`border-r border-[#848284] p-0 font-normal whitespace-nowrap ${c.width}`}>
                          <span className="block border-l border-white pl-1 leading-5">{c.label}</span>
                        </th>
                      ))}
                    </tr>
                  </thead>
                </table>
              </div>
              <p className="flex h-7 shrink-0 items-center border-t border-white pt-0.5 pl-1.5">There are no items selected</p>
              <div className="h-[191px] shrink-0 border-t-2 border-[#424142] bg-white" />
            </div>
          </div>
        </main>

        <aside className="ml-1 flex w-[238px] shrink-0 flex-col border-t-2 border-r border-b border-l-2 border-t-[#424142] border-r-white border-b-white border-l-[#424142] bg-white">
          <h2 className="h-[17px] border-b border-[#848284] bg-[#d6d3ce] pl-1 leading-[18px] font-bold">Actions</h2>
          <div className="flex h-[26px] items-center border-t border-white bg-[#d6d3ce] pr-1.5 pl-[5px] font-bold">
            <h3 className="flex-1 pt-px">Unassigned Computers</h3>
            <Triangle dir="up" />
          </div>
          <div className="divide-y divide-[#d6d3ce] pr-1.5 pl-[5px]">
            <div>
              <ActionRow label="Search..." icon={<SearchIcon />} />
            </div>
            <div>
              <ActionRow label="View"><Triangle dir="right" /></ActionRow>
              <ActionRow label="New Window from Here" />
            </div>
            <div>
              <ActionRow label="Refresh" icon={<RefreshPageIcon />} />
            </div>
            <div>
              <ActionRow label="Help" icon={<HelpIcon />} />
            </div>
          </div>
        </aside>
      </div>

      <footer className="mt-[3px] flex h-[17px] shrink-0 gap-0.5 pr-px">
        <div className={`flex-1 ${SUNKEN}`} />
        <div className={`w-[131px] ${SUNKEN}`} />
        <div className={`w-[84px] ${SUNKEN}`} />
      </footer>
    </section>
  );
}

function BarGrip() {
  return <span className="h-5 w-[3px] border-l border-l-white border-r border-r-[#848284]" />;
}

function Taskbar() {
  return (
    <footer className="flex h-7 shrink-0 items-center border-t border-[#d6d3ce] bg-[#d6d3ce] px-0.5 shadow-[inset_0_1px_0_#ffffff]">
      <button type="button" className={`flex h-[22px] w-[53px] items-center pl-0.5 font-bold ${RAISED}`}>
        <Svg16>
          <path d="M2 3c2-1.500 4-1.500 6-.3L7 7C5 6 3 6 1 7.200z" fill="#ed6a35" />
          <path d="M9 3c2 1 4 1 6 0l-1.200 4.500C12 8.500 10 8.300 8 7.300z" fill="#78bf35" />
          <path d="M1 8.300C3 7 5 7 7 8l-1 4.700c-2-1-4-1-6 .3z" fill="#3b8fe2" />
          <path d="M8 8.500c2 1 4 1 6 0l-1.200 4.700c-2 1-4 1-6-.3z" fill="#f7c62c" />
        </Svg16>
        <span>Start</span>
      </button>
      <nav aria-label="Quick launch" className="mr-2.5 ml-1.5 flex items-center gap-[7px]">
        <BarGrip />
        <button type="button" aria-label="Server Manager"><ServerToolsIcon /></button>
        <button type="button" aria-label="Show desktop"><DesktopIcon /></button>
        <button type="button" aria-label="Internet Explorer"><ExplorerIcon /></button>
        <button type="button" aria-label="Firefox">
          <svg viewBox="0 0 48 48" className="h-4 w-4" aria-hidden="true"><FirefoxArt /></svg>
        </button>
      </nav>
      <BarGrip />
      <button type="button" className={`ml-1 flex h-[22px] w-40 items-center gap-[3px] pl-1 ${RAISED}`}>
        <ServerToolsIcon />
        Server Manager
      </button>
      <button type="button" className={`ml-[3px] flex h-[22px] w-40 items-center gap-[3px] border-2 border-t-[#424142] border-r-white border-b-white border-l-[#424142] pt-0.5 pl-[3px] font-bold ${CHECKER}`}>
        <ServerUpdateIcon />
        Update Services
      </button>
      <div className="flex-1" />
      <BarGrip />
      <span className="mr-2 ml-1.5">NO</span>
      <div className={`flex h-[22px] items-center pr-[7px] pl-[3px] ${SUNKEN}`}>
        <svg viewBox="0 0 48 48" className="h-4 w-4" aria-hidden="true"><FileZillaArt /></svg>
        <span className="w-3" />
        <Svg16>
          <path d="M5.500.500h9v8h-9z" fill="#2da5e6" stroke="#243d63" />
          <path d="M1.500 4.500h9v7h-9z" fill="#59c1ef" stroke="#243d63" />
          <path d="M4 13.500h5" stroke="#535b65" />
          <circle cx="11" cy="11" r="4" fill="#2583cb" stroke="#135692" strokeWidth=".6" />
          <path d="M9 8.500c2-.5 3 1 1 2s0 3 1 4c-3 0-4-4-2-6z" fill="#59c63f" />
        </Svg16>
        <span className="w-0.5" />
        <Svg16>
          <path d="M1.500 6.500h2l4-4.500v12l-4-4.500h-2z" fill="#ededed" stroke="#777" />
          <path d="M9 4c2 2 2 5 1 7" fill="none" stroke="#999" />
          <circle cx="11" cy="11.500" r="4" fill="#fff" stroke="#d83331" strokeWidth="1.300" />
          <path d="m9.300 9.800 3.400 3.400m0-3.400-3.400 3.400" stroke="#d83331" strokeWidth="1.300" />
        </Svg16>
        <time className="ml-1.5">15:35</time>
      </div>
    </footer>
  );
}

export default function App() {
  return (
    <div className="flex h-screen flex-col overflow-hidden bg-[#185d7b] font-['DejaVu_Sans_Condensed','DejaVu_Sans',sans-serif] text-[11px] leading-4 text-black">
      <div className="relative min-h-0 flex-1">
        <div className="grid w-[73px] auto-rows-[99px] items-start">
          <DesktopItem label="Computer"><ComputerArt /></DesktopItem>
          <DesktopItem label="Recycle Bin"><BinArt /></DesktopItem>
          <DesktopItem label="Mozilla Firefox"><Svg48 shortcut><FirefoxArt /></Svg48></DesktopItem>
          <DesktopItem label={"FileZilla Server\nInterface"}><Svg48 shortcut><FileZillaArt /></Svg48></DesktopItem>
          <DesktopItem label="ip"><NotesArt /></DesktopItem>
          <DesktopItem label={"Xlight ftp\nserver"}><LeafArt /></DesktopItem>
          <DesktopItem label="setup"><SetupArt /></DesktopItem>
          <DesktopItem label="WSUSSetup..." className="row-start-9"><AppWindowArt /></DesktopItem>
        </div>
        <ServerManager />
        <UpdateServices />
      </div>
      <Taskbar />
    </div>
  );
}
